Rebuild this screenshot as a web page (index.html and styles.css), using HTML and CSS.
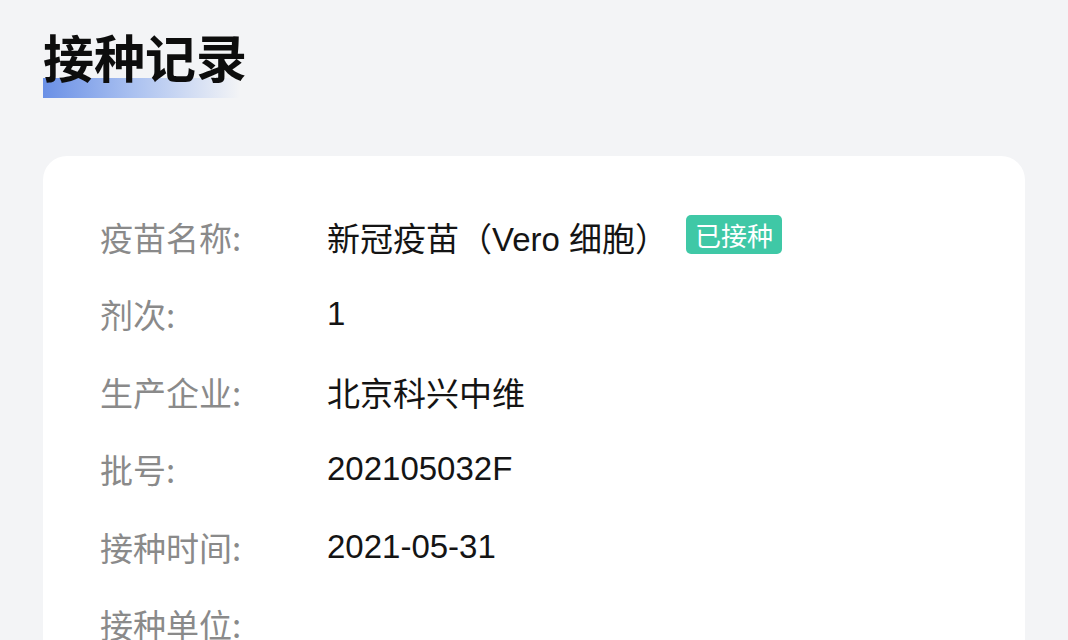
FILE: index.html
```html
<!DOCTYPE html>
<html lang="zh">
<head>
<meta charset="utf-8">
<link rel="stylesheet" href="styles.css">
</head>
<body>
<div class="page">
  <h1 class="title">接种记录</h1>
  <div class="card">
    <div class="row"><span class="label">疫苗名称:</span><span class="value">新冠疫苗（Vero 细胞）<span class="badge">已接种</span></span></div>
    <div class="row"><span class="label">剂次:</span><span class="value">1</span></div>
    <div class="row"><span class="label">生产企业:</span><span class="value">北京科兴中维</span></div>
    <div class="row"><span class="label">批号:</span><span class="value">202105032F</span></div>
    <div class="row"><span class="label">接种时间:</span><span class="value">2021-05-31</span></div>
    <div class="row"><span class="label">接种单位:</span><span class="value"></span></div>
  </div>
</div>
</body>
</html>
```
FILE: styles.css
```css
html, body {
  margin: 0;
  padding: 0;
  background: #f3f4f6;
  font-family: "Liberation Sans", "Noto Sans CJK SC", sans-serif;
  overflow: hidden;
}
.page {
  padding: 24px 43px 0 43px;
  height: 640px;
  box-sizing: border-box;
}
.title {
  display: inline-block;
  margin: 0;
  font-family: "Noto Sans CJK SC", sans-serif;
  font-size: 51px;
  font-weight: 700;
  line-height: 64px;
  color: #0d0d0d;
  width: 197px;
  white-space: nowrap;
  background: linear-gradient(90deg, #6a90e6 0%, #a9c0f0 45%, rgba(243,244,246,0) 100%) no-repeat left 54px / 100% 20px;
  padding-bottom: 10px;
}
.card {
  margin-top: 58px;
  background: #ffffff;
  border-radius: 24px;
  padding: 42px 0 0 57px;
  height: 600px;
}
.row {
  display: flex;
  align-items: center;
  height: 77.5px;
}
.label {
  width: 227px;
  font-size: 33px;
  color: #8a8a8a;
  font-family: "Noto Sans CJK SC", sans-serif;
}
.value {
  display: flex;
  align-items: center;
  font-size: 33px;
  color: #141414;
}
.badge {
  margin-left: 18px;
  background: #3fc8a6;
  color: #ffffff;
  font-size: 26px;
  line-height: 39px;
  height: 39px;
  padding: 0 9px;
  border-radius: 5px;
  font-family: "Noto Sans CJK SC", sans-serif;
  transform: translateY(-2px);
}
```
